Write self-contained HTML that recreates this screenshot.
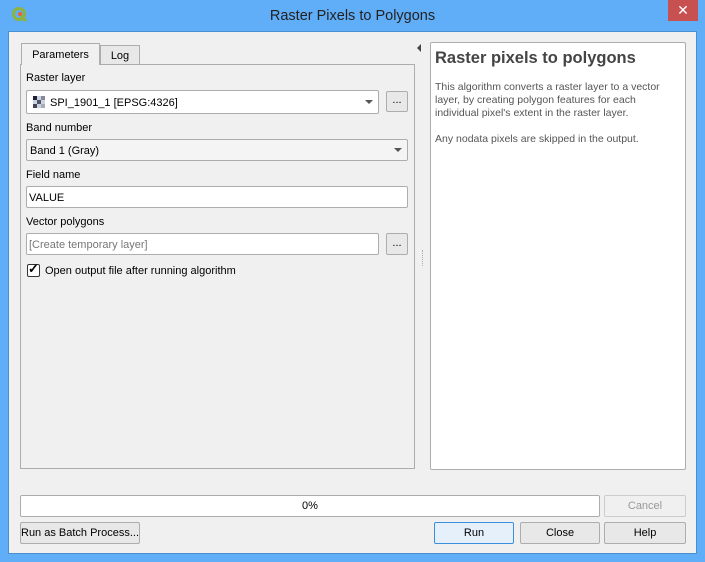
<!DOCTYPE html>
<html><head><meta charset="utf-8"><style>
*{box-sizing:border-box;margin:0;padding:0}
body{width:705px;height:562px;overflow:hidden;background:#60aef8;font-family:"Liberation Sans",sans-serif;font-size:11px;color:#000;position:relative}
.a{position:absolute}
.client{left:8px;top:31px;width:689px;height:523px;background:#f0f0f0;border:1px solid #4a90d0}
.box{border:1px solid #adadad;border-radius:2px;background:#fff}
.btn{border:1px solid #adadad;border-radius:2px;background:#e8e8e8;text-align:center;line-height:20px;white-space:nowrap}
.lbl{white-space:nowrap}
.arrow{width:0;height:0;border-left:4px solid transparent;border-right:4px solid transparent;border-top:4px solid #555}
.p{color:#555;font-size:10.5px;line-height:13px}
</style></head><body>
<div class="a" style="left:668px;top:0;width:30px;height:21px;background:#c75050;color:#fff;text-align:center;font-size:14px;line-height:21px">✕</div>
<svg class="a" style="left:11px;top:6px" width="18" height="18" viewBox="0 0 18 18"><circle cx="8" cy="8" r="5.5" fill="none" stroke="#8db33a" stroke-width="3"/><path d="M10 10 L15 15" stroke="#8db33a" stroke-width="3"/><circle cx="9" cy="8" r="2" fill="#f0602a"/></svg>
<div class="a lbl" style="left:0;width:705px;top:8px;text-align:center;font-size:14.5px;color:#222">Raster Pixels to Polygons</div>
<div class="a client"></div>

<div class="a" style="left:20px;top:64px;width:395px;height:405px;border:1px solid #adadad;background:#f0f0f0"></div>
<div class="a" style="left:21px;top:43px;width:79px;height:22px;border:1px solid #adadad;border-bottom:none;background:#f0f0f0;text-align:center;line-height:23px">Parameters</div>
<div class="a" style="left:100px;top:45px;width:40px;height:20px;border:1px solid #adadad;background:#e8e8e8;text-align:center;line-height:21px">Log</div>

<div class="a lbl" style="left:26px;top:72px">Raster layer</div>
<div class="a box" style="left:26px;top:90px;width:353px;height:24px"></div>
<svg class="a" style="left:33px;top:96px" width="12" height="12"><rect width="12" height="12" fill="#c8d4e4"/><rect x="0" y="0" width="4" height="4" fill="#223"/><rect x="4" y="4" width="4" height="4" fill="#556"/><rect x="8" y="0" width="4" height="4" fill="#889"/><rect x="0" y="8" width="4" height="4" fill="#445"/><rect x="8" y="8" width="4" height="4" fill="#aab"/></svg>
<div class="a lbl" style="left:50px;top:97px">SPI_1901_1 [EPSG:4326]</div>
<div class="a arrow" style="left:365px;top:100px"></div>
<div class="a btn" style="left:386px;top:91px;width:22px;height:21px;line-height:17px">...</div>

<div class="a lbl" style="left:26px;top:122px">Band number</div>
<div class="a box" style="left:26px;top:139px;width:382px;height:22px;background:#f4f4f4"></div>
<div class="a lbl" style="left:30px;top:145px">Band 1 (Gray)</div>
<div class="a arrow" style="left:394px;top:148px"></div>

<div class="a lbl" style="left:26px;top:169px">Field name</div>
<div class="a box" style="left:26px;top:186px;width:382px;height:22px"></div>
<div class="a lbl" style="left:29px;top:192px">VALUE</div>

<div class="a lbl" style="left:26px;top:216px">Vector polygons</div>
<div class="a box" style="left:26px;top:233px;width:353px;height:22px"></div>
<div class="a lbl" style="left:29px;top:239px;color:#777">[Create temporary layer]</div>
<div class="a btn" style="left:386px;top:233px;width:22px;height:22px;line-height:18px">...</div>

<div class="a box" style="left:27px;top:264px;width:13px;height:13px;border-color:#333"></div>
<div class="a" style="left:28px;top:261px;font-size:13px;font-weight:bold">✓</div>
<div class="a lbl" style="left:45px;top:265px">Open output file after running algorithm</div>

<div class="a" style="left:417px;top:44px;width:0;height:0;border-top:4px solid transparent;border-bottom:4px solid transparent;border-right:4px solid #444"></div>
<div class="a" style="left:422px;top:250px;width:1px;height:16px;border-left:1px dotted #aaa"></div>

<div class="a box" style="left:430px;top:42px;width:256px;height:428px"></div>
<div class="a lbl" style="left:435px;top:49px;font-size:16.5px;font-weight:bold;color:#444">Raster pixels to polygons</div>
<div class="a p" style="left:435px;top:81px;width:238px">This algorithm converts a raster layer to a vector layer, by creating polygon features for each individual pixel's extent in the raster layer.<br><br>Any nodata pixels are skipped in the output.</div>

<div class="a box" style="left:20px;top:495px;width:580px;height:22px;text-align:center;line-height:21px">0%</div>
<div class="a btn" style="left:604px;top:495px;width:82px;height:22px;color:#999;background:#f0f0f0;border-color:#ccc">Cancel</div>
<div class="a btn" style="left:20px;top:522px;width:120px;height:22px">Run as Batch Process...</div>
<div class="a btn" style="left:434px;top:522px;width:80px;height:22px;border-color:#3c8fdc;background:#e5f0fb">Run</div>
<div class="a btn" style="left:520px;top:522px;width:80px;height:22px">Close</div>
<div class="a btn" style="left:604px;top:522px;width:82px;height:22px">Help</div>
</body></html>
